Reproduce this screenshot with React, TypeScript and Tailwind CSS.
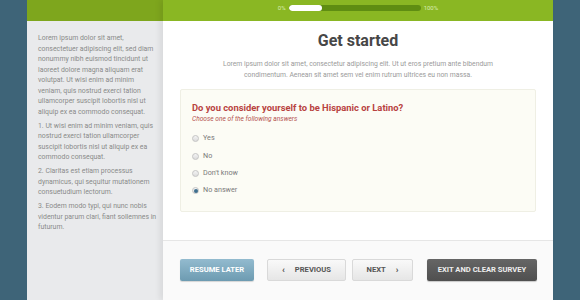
import React from "react";

const sidebar = [
  [
    "Lorem ipsum dolor sit amet,",
    "consectetuer adipiscing elit, sed diam",
    "nonummy nibh euismod tincidunt ut",
    "laoreet dolore magna aliquam erat",
    "volutpat. Ut wisi enim ad minim",
    "veniam, quis nostrud exerci tation",
    "ullamcorper suscipit lobortis nisl ut",
    "aliquip ex ea commodo consequat.",
  ],
  [
    "1. Ut wisi enim ad minim veniam, quis",
    "nostrud exerci tation ullamcorper",
    "suscipit lobortis nisl ut aliquip ex ea",
    "commodo consequat.",
  ],
  [
    "2. Claritas est etiam processus",
    "dynamicus, qui sequitur mutationem",
    "consuetudium lectorum.",
  ],
  [
    "3. Eodem modo typi, qui nunc nobis",
    "videntur parum clari, fiant sollemnes in",
    "futurum.",
  ],
];

const answers = ["Yes", "No", "Don't know", "No answer"];

const Radio = ({ checked }: { checked?: boolean }) => (
  <span className="w-[7px] h-[7px] rounded-full border border-[#c4c4c4] bg-gradient-to-b from-[#f4f4f4] to-[#dcdcdc] flex items-center justify-center">
    {checked && <span className="w-[4px] h-[4px] rounded-full bg-[#3f6f8e]" />}
  </span>
);

export default function App() {
  return (
    <div
      className="w-[580px] h-[300px] overflow-hidden bg-[#3e6478] flex px-[27px]"
      style={{ fontFamily: "Roboto, 'Noto Sans', sans-serif" }}
    >
      {/* sidebar */}
      <div className="w-[136px] flex flex-col bg-[#e9eaec]">
        <div className="h-[21px] bg-[#7ea61d] shrink-0" />
        <div className="pl-[11px] pt-[12px] text-[6.9px] leading-[10.5px] text-[#8a8a8a] flex flex-col gap-[3.5px]">
          {sidebar.map((p, i) => (
            <p key={i}>
              {p.map((l) => (
                <span key={l} className="block whitespace-nowrap">
                  {l}
                </span>
              ))}
            </p>
          ))}
        </div>
      </div>

      {/* main */}
      <div className="flex-1 flex flex-col bg-white shadow-[-3px_0_6px_rgba(0,0,0,0.08)] relative">
        <div className="h-[21px] bg-[#8ab723] shrink-0 flex items-center justify-center gap-[3px] text-[6px] text-[#d8ecb0] pb-[6px]">
          <span>0%</span>
          <div className="w-[132px] h-[6px] rounded-full bg-[#5f8d12] overflow-hidden">
            <div className="w-[33px] h-full rounded-full bg-white" />
          </div>
          <span>100%</span>
        </div>

        <div className="h-[219px] flex flex-col items-center px-[17px]">
          <h1 className="mt-[10px] text-[16px] font-bold leading-[20px] text-[#474747]">Get started</h1>
          <p className="mt-[8px] text-[6.8px] leading-[11px] text-[#9a9a9a] text-center">
            Lorem ipsum dolor sit amet, consectetur adipiscing elit. Ut ut eros pretium ante bibendum
            <br />
            condimentum. Aenean sit amet sem vel enim rutrum ultrices eu non massa.
          </p>
          <div className="mt-[8px] w-full h-[123px] border border-[#efefe4] bg-[#fcfcf5] rounded-[2px] pl-[11px] pt-[12px]">
            <div className="text-[9.4px] font-bold leading-[12px] text-[#b8423f]">
              Do you consider yourself to be Hispanic or Latino?
            </div>
            <div className="text-[6.6px] italic leading-[10px] text-[#b5524f]">
              Choose one of the following answers
            </div>
            <div className="mt-[6px] flex flex-col">
              {answers.map((a, i) => (
                <div key={a} className="h-[17.4px] flex items-center gap-[4px] text-[7.2px] text-[#7a7a7a]">
                  <Radio checked={i === 3} />
                  <span>{a}</span>
                </div>
              ))}
            </div>
          </div>
        </div>

        <div className="flex-1 border-t border-[#e6e6e6] bg-[#fafafa] flex items-start pl-[17px] pt-[18px] text-[7.6px] font-bold">
          <button className="w-[74px] h-[22px] rounded-[2px] bg-gradient-to-b from-[#93bbcf] to-[#6d9bb1] text-white shadow-[0_1px_1px_rgba(0,0,0,0.15)]">
            RESUME LATER
          </button>
          <button className="ml-[13px] w-[79px] h-[22px] rounded-[2px] border border-[#d9d9d9] bg-gradient-to-b from-[#f9f9f9] to-[#e6e6e6] text-[#555] flex items-center justify-center gap-[10px]">
            <span className="text-[9px] leading-none font-black">‹</span>
            <span>PREVIOUS</span>
          </button>
          <button className="ml-[6px] w-[61px] h-[22px] rounded-[2px] border border-[#d9d9d9] bg-gradient-to-b from-[#f9f9f9] to-[#e6e6e6] text-[#555] flex items-center justify-center gap-[10px]">
            <span>NEXT</span>
            <span className="text-[9px] leading-none font-black">›</span>
          </button>
          <button className="ml-[14px] w-[110px] h-[22px] rounded-[2px] bg-gradient-to-b from-[#666] to-[#4f4f4f] text-[#eee] shadow-[0_1px_1px_rgba(0,0,0,0.2)]">
            EXIT AND CLEAR SURVEY
          </button>
        </div>
      </div>
    </div>
  );
}
